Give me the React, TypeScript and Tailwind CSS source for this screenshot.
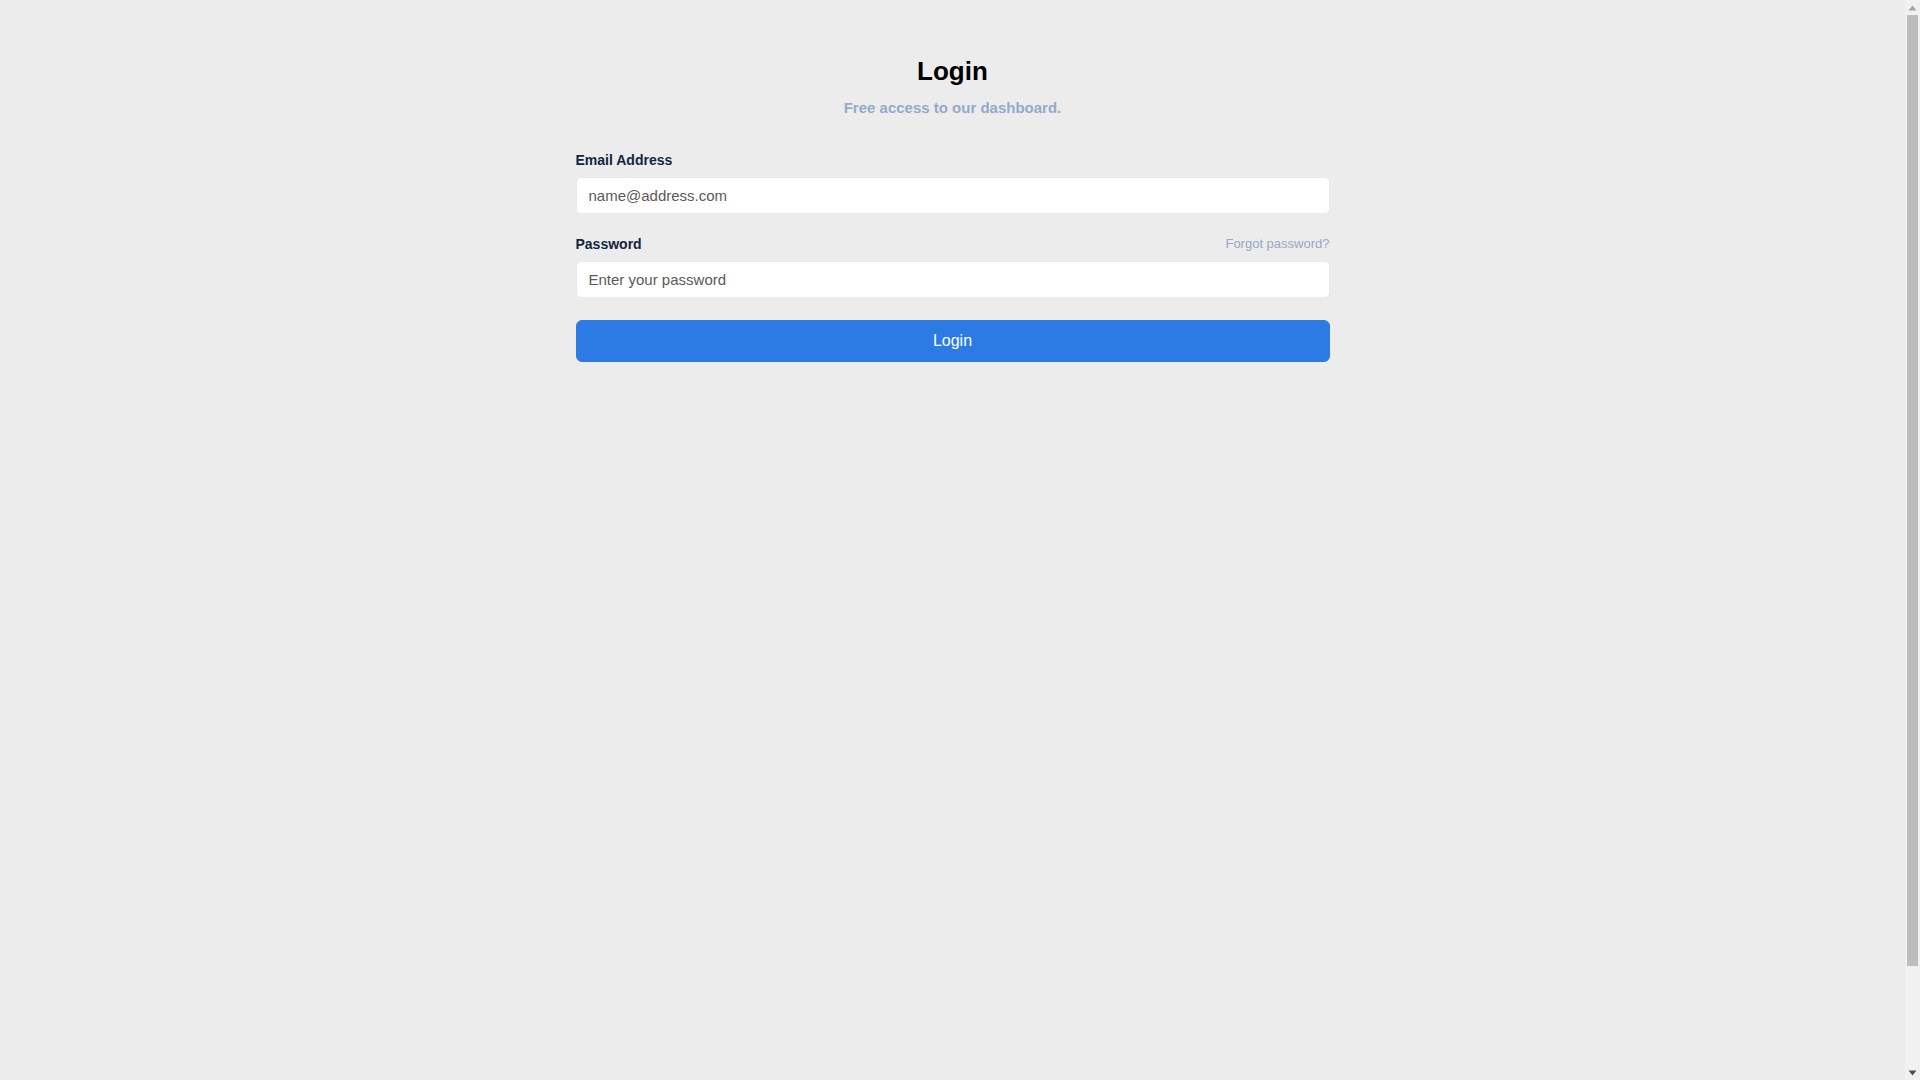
import React from "react";

function FakeScrollbar() {
  return (
    <div className="flex h-full w-[15px] shrink-0 flex-col items-center bg-[#f1f1f1]">
      <div className="flex h-[15px] w-full items-center justify-center">
        <svg width="9" height="6" viewBox="0 0 9 6">
          <polygon points="4.5,0.5 8.5,5.5 0.5,5.5" fill="#a3a3a3" />
        </svg>
      </div>
      <div className="h-[951px] w-[11px] bg-[#bdbdbd]" />
      <div className="flex-1" />
      <div className="flex h-[15px] w-full items-center justify-center">
        <svg width="9" height="6" viewBox="0 0 9 6">
          <polygon points="0.5,0.5 8.5,0.5 4.5,5.5" fill="#505050" />
        </svg>
      </div>
    </div>
  );
}

export default function App() {
  return (
    <div
      className="flex h-[1080px] w-full overflow-hidden bg-[#ececec]"
      style={{ fontFamily: '"Liberation Sans", Arial, sans-serif' }}
    >
      <main className="flex-1">
        <div className="mx-auto w-[754px] pt-[56px]">
          <h1 className="text-center text-[26px] font-bold leading-[31px] text-black">Login</h1>
          <p className="mt-[10px] text-center text-[15px] font-bold leading-[22px] text-[#95aac9]">
            Free access to our dashboard.
          </p>

          <form className="flex flex-col" onSubmit={(e) => e.preventDefault()}>
            <label className="mt-[31px] text-[14px] font-bold leading-[20px] text-[#12263f]">
              Email Address
            </label>
            <input
              type="email"
              placeholder="name@address.com"
              className="mt-[7px] h-[37px] w-full rounded-[5px] border border-[#e3ebf6] bg-white px-[12px] text-[15px] text-[#12263f] outline-none placeholder:text-[#5a5a5a]"
            />

            <div className="mt-[20px] flex items-center justify-between">
              <label className="text-[14px] font-bold leading-[20px] text-[#12263f]">Password</label>
              <a href="#" className="text-[13px] leading-[20px] text-[#95aac9]">
                Forgot password?
              </a>
            </div>
            <input
              type="password"
              placeholder="Enter your password"
              className="mt-[7px] h-[37px] w-full rounded-[5px] border border-[#e3ebf6] bg-white px-[12px] text-[15px] text-[#12263f] outline-none placeholder:text-[#5a5a5a]"
            />

            <button
              type="submit"
              className="mt-[22px] h-[42px] w-full rounded-[6px] border border-[#2c7be5] bg-[#2c7be5] text-[16px] text-white"
            >
              Login
            </button>
          </form>
        </div>
      </main>
      <FakeScrollbar />
    </div>
  );
}
